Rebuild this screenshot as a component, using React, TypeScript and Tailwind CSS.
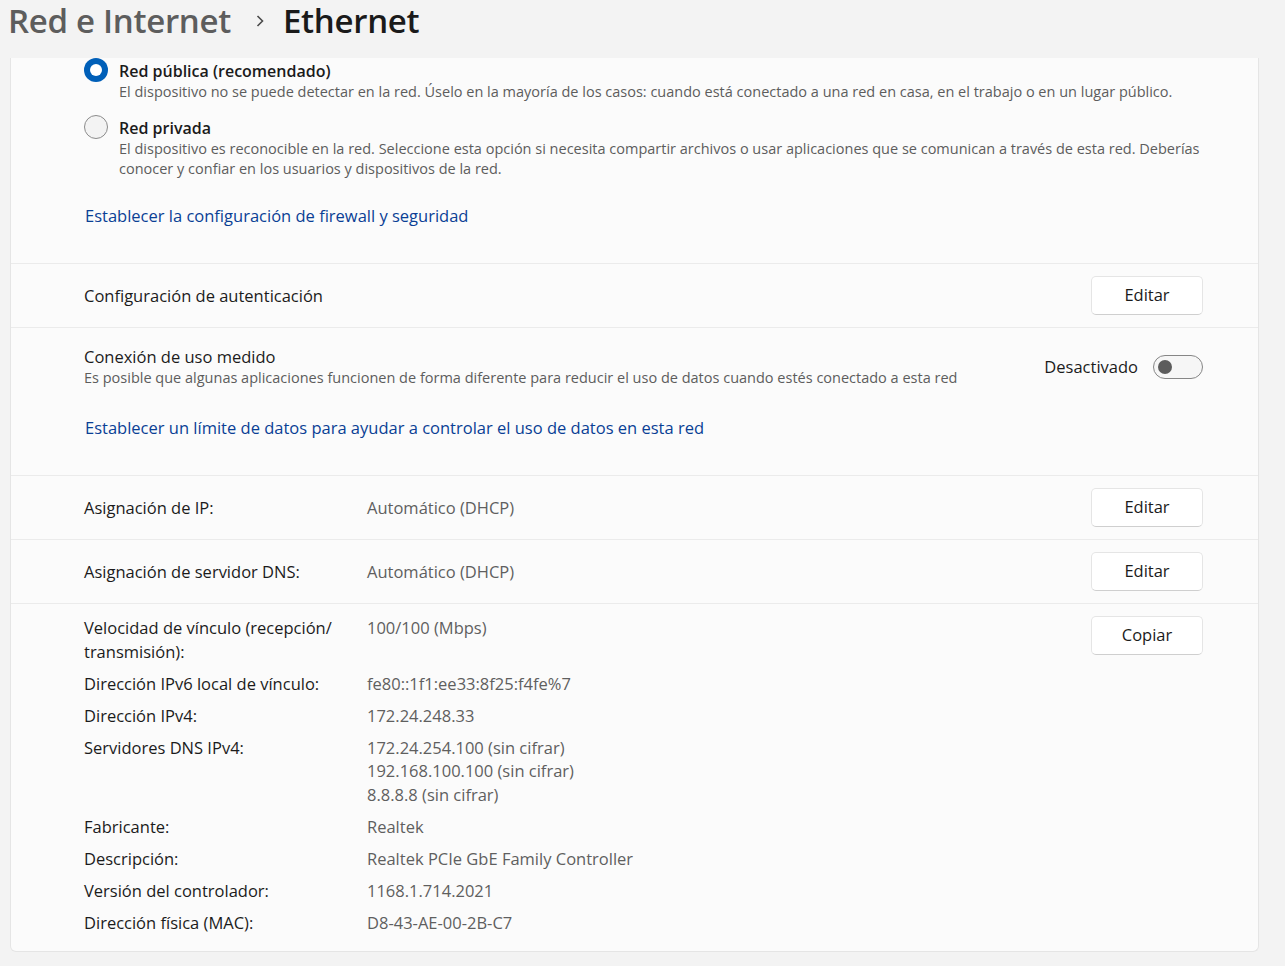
import React from 'react';

const props: { label: string; value: string[] }[] = [
  { label: 'Velocidad de vínculo (recepción/ transmisión):', value: ['100/100 (Mbps)'] },
  { label: 'Dirección IPv6 local de vínculo:', value: ['fe80::1f1:ee33:8f25:f4fe%7'] },
  { label: 'Dirección IPv4:', value: ['172.24.248.33'] },
  {
    label: 'Servidores DNS IPv4:',
    value: ['172.24.254.100 (sin cifrar)', '192.168.100.100 (sin cifrar)', '8.8.8.8 (sin cifrar)'],
  },
  { label: 'Fabricante:', value: ['Realtek'] },
  { label: 'Descripción:', value: ['Realtek PCIe GbE Family Controller'] },
  { label: 'Versión del controlador:', value: ['1168.1.714.2021'] },
  { label: 'Dirección física (MAC):', value: ['D8-43-AE-00-2B-C7'] },
];

function Button({ children }: { children: React.ReactNode }) {
  return (
    <button className="w-[112px] h-[39px] shrink-0 rounded-[5px] border border-[#e5e5e5] border-b-[#cfcfcf] bg-white text-[16.5px] text-[#1b1b1b]">
      {children}
    </button>
  );
}

function Radio({ checked }: { checked?: boolean }) {
  if (checked) {
    return (
      <span className="w-6 h-6 shrink-0 rounded-full bg-[#005fb8] flex items-center justify-center">
        <span className="w-[12px] h-[12px] rounded-full bg-white" />
      </span>
    );
  }
  return <span className="w-6 h-6 shrink-0 rounded-full border border-[#8b8b8b] bg-[#f3f3f3]" />;
}

export default function App() {
  return (
    <div className="min-h-screen bg-[#f3f3f3] font-['Open_Sans',sans-serif] text-[#1b1b1b]">
      <div className="h-[58px] flex items-start pl-[8px]">
        <span className="text-[33px] leading-[42px] font-semibold text-[#5d5d5d] tracking-[-0.3px]">Red e Internet</span>
        <svg className="ml-[23px] mr-[17px] mt-[14px]" width="12" height="14" viewBox="0 0 12 14">
          <path d="M3.5 2 L8.5 7 L3.5 12" fill="none" stroke="#4a4a4a" strokeWidth="1.6" />
        </svg>
        <span className="text-[33px] leading-[42px] font-semibold text-[#1a1a1a] tracking-[-0.3px]">Ethernet</span>
      </div>

      <div className="ml-[10px] w-[1249px] bg-[#fbfbfb] border border-t-0 border-[#e5e5e5] rounded-b-[6px] text-[16.5px]">
        {/* network profile */}
        <div className="pl-[73px] pr-[56px] pb-[35px]">
          <div className="flex gap-[11px]">
            <Radio checked />
            <div className="mt-[2px]">
              <div className="text-[16px] leading-[22px] font-semibold">Red pública (recomendado)</div>
              <div className="text-[14.5px] leading-[20px] text-[#5d5d5d]">
                El dispositivo no se puede detectar en la red. Úselo en la mayoría de los casos: cuando está conectado a una red en casa, en el trabajo o en un lugar público.
              </div>
            </div>
          </div>
          <div className="flex gap-[11px] mt-[13px]">
            <Radio />
            <div className="mt-[2px]">
              <div className="text-[16px] leading-[22px] font-semibold">Red privada</div>
              <div className="text-[14.5px] leading-[20px] text-[#5d5d5d]">
                El dispositivo es reconocible en la red. Seleccione esta opción si necesita compartir archivos o usar aplicaciones que se comunican a través de esta red. Deberías conocer y confiar en los usuarios y dispositivos de la red.
              </div>
            </div>
          </div>
          <div className="mt-[25px] pl-[1px] leading-[24px] text-[#0a3f95]">
            Establecer la configuración de firewall y seguridad
          </div>
        </div>

        {/* auth */}
        <div className="border-t border-[#ebebeb] h-[64px] flex items-center justify-between pl-[73px] pr-[55px]">
          <span className="pt-[2px]">Configuración de autenticación</span>
          <Button>Editar</Button>
        </div>

        {/* metered */}
        <div className="border-t border-[#ebebeb] pl-[73px] pr-[55px] pt-[18px] pb-[35px]">
          <div className="flex items-center justify-between">
            <div>
              <div className="leading-[22px]">Conexión de uso medido</div>
              <div className="text-[14.5px] leading-[20px] text-[#5d5d5d]">
                Es posible que algunas aplicaciones funcionen de forma diferente para reducir el uso de datos cuando estés conectado a esta red
              </div>
            </div>
            <div className="flex items-center gap-[15px]">
              <span>Desactivado</span>
              <span className="w-[50px] h-[24px] rounded-full border border-[#868686] bg-[#f6f6f6] flex items-center pl-[4px]">
                <span className="w-[14px] h-[14px] rounded-full bg-[#5c5c5c]" />
              </span>
            </div>
          </div>
          <div className="mt-[28px] pl-[1px] leading-[24px] text-[#0a3f95]">
            Establecer un límite de datos para ayudar a controlar el uso de datos en esta red
          </div>
        </div>

        {/* ip */}
        <div className="border-t border-[#ebebeb] h-[64px] flex items-center pl-[73px] pr-[55px]">
          <span className="w-[283px] pt-[2px]">Asignación de IP:</span>
          <span className="flex-1 pt-[2px] text-[#5f5f5f]">Automático (DHCP)</span>
          <Button>Editar</Button>
        </div>
        <div className="border-t border-[#ebebeb] h-[64px] flex items-center pl-[73px] pr-[55px]">
          <span className="w-[283px] pt-[2px]">Asignación de servidor DNS:</span>
          <span className="flex-1 pt-[2px] text-[#5f5f5f]">Automático (DHCP)</span>
          <Button>Editar</Button>
        </div>

        {/* properties */}
        <div className="border-t border-[#ebebeb] flex items-start pl-[73px] pr-[55px] pt-[12px] pb-[17px]">
          <div className="flex-1 flex flex-col gap-y-[8.5px]">
            {props.map((p) => (
              <div key={p.label} className="flex leading-[23.5px]">
                <div className="w-[283px] pr-[24px]">{p.label}</div>
                <div className="text-[#5f5f5f]">
                  {p.value.map((v) => (
                    <div key={v}>{v}</div>
                  ))}
                </div>
              </div>
            ))}
          </div>
          <Button>Copiar</Button>
        </div>
      </div>
    </div>
  );
}
